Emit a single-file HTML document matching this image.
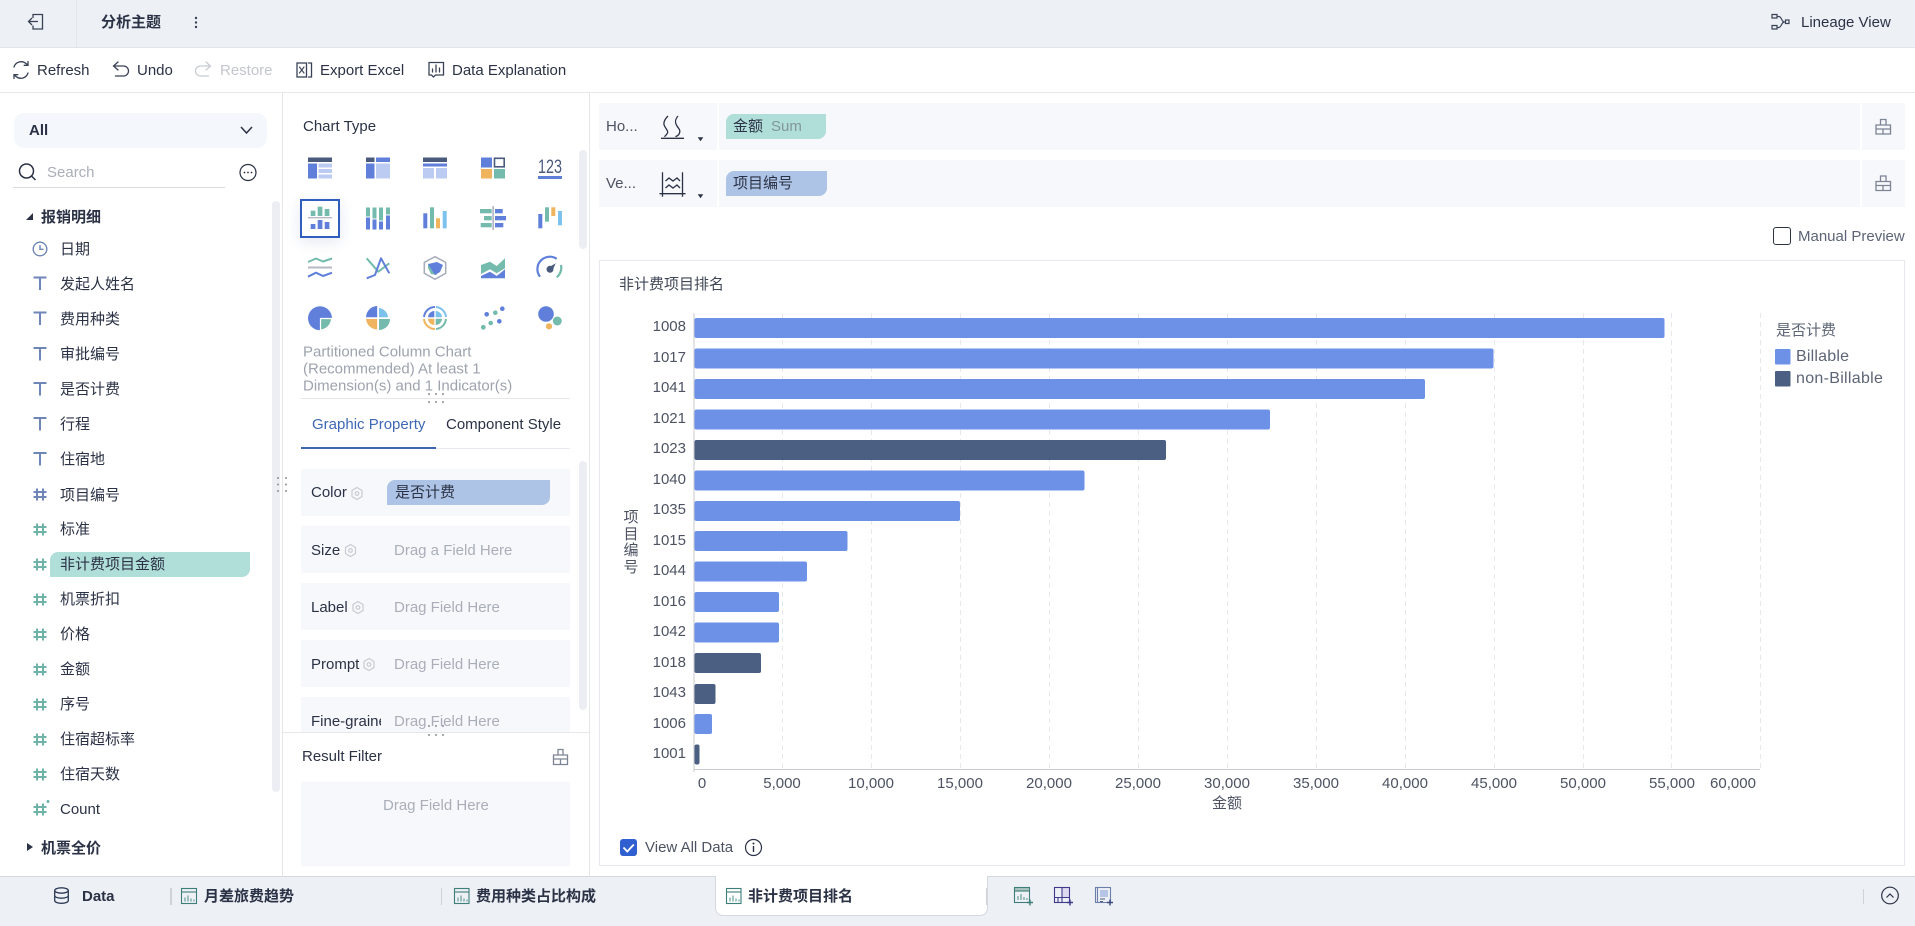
<!DOCTYPE html>
<html lang="zh">
<head>
<meta charset="utf-8">
<title>分析主题</title>
<style>
html,body{margin:0;padding:0;width:1915px;height:926px;overflow:hidden;background:#fff}
body{position:relative;font-family:"Liberation Sans","Noto Sans CJK SC",sans-serif;font-size:15px;color:#2b3245}
.b{position:absolute}
.t{position:absolute;white-space:nowrap;transform:translateY(-50%);line-height:20px}
.g{color:#a9aeb8}
.r{text-align:right;width:50px;color:#4d5362}
.c{transform:translate(-50%,-50%);color:#4d5362}
.bd{font-weight:bold}
.chip{position:absolute;border-radius:8px 0 8px 0}
.row{position:absolute;left:301px;width:269px;height:47px;background:#f7f8fc}
svg{position:absolute;left:0;top:0;pointer-events:none}
</style>
</head>
<body>
<!-- backgrounds -->
<div class="b" style="left:0;top:0;width:1915px;height:47px;background:#edf0f5;border-bottom:1px solid #e2e4e9"></div>
<div class="b" style="left:76px;top:0;width:1px;height:47px;background:#e3e6ec"></div>
<div class="b" style="left:0;top:92px;width:1915px;height:1px;background:#e6e7ea"></div>
<div class="b" style="left:282px;top:93px;width:1px;height:783px;background:#e6e7ea"></div>
<div class="b" style="left:589px;top:93px;width:1px;height:783px;background:#e6e7ea"></div>

<!-- top bar -->
<div class="t bd" style="left:101px;top:23px">分析主题</div>
<div class="t" style="left:1801px;top:23px">Lineage View</div>

<!-- toolbar -->
<div class="t" style="left:37px;top:71px">Refresh</div>
<div class="t" style="left:137px;top:71px">Undo</div>
<div class="t" style="left:220px;top:71px;color:#c3c6cd">Restore</div>
<div class="t" style="left:320px;top:71px">Export Excel</div>
<div class="t" style="left:452px;top:71px">Data Explanation</div>

<!-- left panel -->
<div class="b" style="left:14px;top:113px;width:253px;height:35px;background:#f4f8fd;border-radius:10px"></div>
<div class="t bd" style="left:29px;top:131px">All</div>
<div class="t g" style="left:47px;top:173px">Search</div>
<div class="b" style="left:13px;top:187px;width:212px;height:1px;background:#d8dade"></div>
<div class="b" style="left:272px;top:201px;width:8px;height:591px;background:#edeef3;border-radius:4px"></div>

<div class="t bd" style="left:41px;top:218px">报销明细</div>
<div class="t" style="left:60px;top:250px">日期</div>
<div class="t" style="left:60px;top:285px">发起人姓名</div>
<div class="t" style="left:60px;top:320px">费用种类</div>
<div class="t" style="left:60px;top:355px">审批编号</div>
<div class="t" style="left:60px;top:390px">是否计费</div>
<div class="t" style="left:60px;top:425px">行程</div>
<div class="t" style="left:60px;top:460px">住宿地</div>
<div class="t" style="left:60px;top:496px">项目编号</div>
<div class="t" style="left:60px;top:530px">标准</div>
<div class="chip" style="left:50px;top:552px;width:200px;height:25px;background:#b0ded8"></div>
<div class="t" style="left:60px;top:565px">非计费项目金额</div>
<div class="t" style="left:60px;top:600px">机票折扣</div>
<div class="t" style="left:60px;top:635px">价格</div>
<div class="t" style="left:60px;top:670px">金额</div>
<div class="t" style="left:60px;top:705px">序号</div>
<div class="t" style="left:60px;top:740px">住宿超标率</div>
<div class="t" style="left:60px;top:775px">住宿天数</div>
<div class="t" style="left:60px;top:810px">Count</div>
<div class="t bd" style="left:41px;top:849px">机票全价</div>

<!-- middle panel -->
<div class="t" style="left:303px;top:127px">Chart Type</div>
<div class="b" style="left:579px;top:150px;width:8px;height:99px;background:#edeef3;border-radius:4px"></div>
<div class="b" style="left:300px;top:199px;width:36px;height:35px;border:2px solid #2f5dc0;background:#fff;box-shadow:0 4px 14px rgba(90,110,170,.16)"></div>
<div class="t g" style="left:303px;top:352px;color:#9ea3ae;line-height:17px">Partitioned Column Chart</div>
<div class="t g" style="left:303px;top:369px;color:#9ea3ae;line-height:17px">(Recommended) At least 1</div>
<div class="t g" style="left:303px;top:386px;color:#9ea3ae;line-height:17px">Dimension(s) and 1 Indicator(s)</div>
<div class="b" style="left:301px;top:398px;width:269px;height:1px;background:#e6e7ea"></div>
<div class="t" style="left:312px;top:425px;color:#3f68b5">Graphic Property</div>
<div class="t" style="left:446px;top:425px">Component Style</div>
<div class="b" style="left:301px;top:448px;width:269px;height:1px;background:#e8e9ee"></div>
<div class="b" style="left:301px;top:447px;width:135px;height:2px;background:#3e65ae"></div>
<div class="b" style="left:579px;top:461px;width:8px;height:249px;background:#edeef3;border-radius:4px"></div>

<div class="row" style="top:469px"></div>
<div class="row" style="top:526px"></div>
<div class="row" style="top:583px"></div>
<div class="row" style="top:640px"></div>
<div class="row" style="top:697px;height:35px"></div>
<div class="t" style="left:311px;top:493px">Color</div>
<div class="chip" style="left:387px;top:480px;width:163px;height:25px;background:#aec4e6"></div>
<div class="t" style="left:395px;top:493px">是否计费</div>
<div class="t" style="left:311px;top:551px">Size</div>
<div class="t g" style="left:394px;top:551px">Drag a Field Here</div>
<div class="t" style="left:311px;top:608px">Label</div>
<div class="t g" style="left:394px;top:608px">Drag Field Here</div>
<div class="t" style="left:311px;top:665px">Prompt</div>
<div class="t g" style="left:394px;top:665px">Drag Field Here</div>
<div class="t" style="left:311px;top:722px;width:70px;overflow:hidden">Fine-grained</div>
<div class="t g" style="left:394px;top:722px">Drag Field Here</div>
<div class="b" style="left:283px;top:732px;width:306px;height:1px;background:#e6e7ea"></div>
<div class="t" style="left:302px;top:757px">Result Filter</div>
<div class="b" style="left:301px;top:782px;width:269px;height:84px;background:#f7f8fc"></div>
<div class="t g" style="left:383px;top:806px">Drag Field Here</div>

<!-- right top -->
<div class="b" style="left:599px;top:103px;width:118px;height:47px;background:#f7f8fc"></div>
<div class="b" style="left:719px;top:103px;width:1141px;height:47px;background:#f7f8fc"></div>
<div class="b" style="left:1862px;top:103px;width:43px;height:47px;background:#f7f8fc"></div>
<div class="b" style="left:599px;top:160px;width:118px;height:47px;background:#f7f8fc"></div>
<div class="b" style="left:719px;top:160px;width:1141px;height:47px;background:#f7f8fc"></div>
<div class="b" style="left:1862px;top:160px;width:43px;height:47px;background:#f7f8fc"></div>
<div class="t" style="left:606px;top:127px;color:#4d5362">Ho...</div>
<div class="t" style="left:606px;top:184px;color:#4d5362">Ve...</div>
<div class="chip" style="left:726px;top:114px;width:100px;height:25px;background:#b0ded8"></div>
<div class="t" style="left:733px;top:127px">金额</div>
<div class="t" style="left:771px;top:127px;color:#84969a">Sum</div>
<div class="chip" style="left:726px;top:171px;width:101px;height:25px;background:#aec4e6"></div>
<div class="t" style="left:733px;top:184px">项目编号</div>
<div class="b" style="left:1773px;top:227px;width:16px;height:16px;border:1px solid #2b3245;border-radius:3px"></div>
<div class="t" style="left:1798px;top:237px;color:#5c6475">Manual Preview</div>

<!-- chart card -->
<div class="b" style="left:599px;top:260px;width:1304px;height:604px;border:1px solid #e8e9ee"></div>
<div class="t" style="left:619px;top:285px;color:#3f4656">非计费项目排名</div>

<div class="t r" style="left:636px;top:327px">1008</div>
<div class="t r" style="left:636px;top:358px">1017</div>
<div class="t r" style="left:636px;top:388px">1041</div>
<div class="t r" style="left:636px;top:419px">1021</div>
<div class="t r" style="left:636px;top:449px">1023</div>
<div class="t r" style="left:636px;top:480px">1040</div>
<div class="t r" style="left:636px;top:510px">1035</div>
<div class="t r" style="left:636px;top:541px">1015</div>
<div class="t r" style="left:636px;top:571px">1044</div>
<div class="t r" style="left:636px;top:602px">1016</div>
<div class="t r" style="left:636px;top:632px">1042</div>
<div class="t r" style="left:636px;top:663px">1018</div>
<div class="t r" style="left:636px;top:693px">1043</div>
<div class="t r" style="left:636px;top:724px">1006</div>
<div class="t r" style="left:636px;top:754px">1001</div>

<div class="t c" style="left:702px;top:784px">0</div>
<div class="t c" style="left:782px;top:784px">5,000</div>
<div class="t c" style="left:871px;top:784px">10,000</div>
<div class="t c" style="left:960px;top:784px">15,000</div>
<div class="t c" style="left:1049px;top:784px">20,000</div>
<div class="t c" style="left:1138px;top:784px">25,000</div>
<div class="t c" style="left:1227px;top:784px">30,000</div>
<div class="t c" style="left:1316px;top:784px">35,000</div>
<div class="t c" style="left:1405px;top:784px">40,000</div>
<div class="t c" style="left:1494px;top:784px">45,000</div>
<div class="t c" style="left:1583px;top:784px">50,000</div>
<div class="t c" style="left:1672px;top:784px">55,000</div>
<div class="t c" style="left:1733px;top:784px">60,000</div>
<div class="t c" style="left:1227px;top:804px">金额</div>
<div class="b" style="left:623px;top:510px;width:16px;line-height:16.6px;text-align:center;color:#4d5362">项<br>目<br>编<br>号</div>

<div class="t" style="left:1776px;top:331px;color:#5c6475">是否计费</div>
<div class="t" style="left:1796px;top:357px;color:#5c6475;font-size:16px;letter-spacing:.2px">Billable</div>
<div class="t" style="left:1796px;top:379px;color:#5c6475;font-size:16px;letter-spacing:.3px">non-Billable</div>

<div class="b" style="left:620px;top:839px;width:17px;height:17px;background:#2f5fd0;border-radius:3px"></div>
<div class="t" style="left:645px;top:848px;color:#4d5362">View All Data</div>

<!-- bottom bar -->
<div class="b" style="left:0;top:876px;width:1915px;height:50px;background:#edf0f5;border-top:1px solid #d5d8de;box-sizing:border-box"></div>
<div class="b" style="left:715px;top:876px;width:271px;height:39px;background:#fff;border:1px solid #d5d8de;border-top:none;border-radius:0 0 8px 8px"></div>
<div class="t bd" style="left:82px;top:897px">Data</div>
<div class="b" style="left:170px;top:888px;width:2px;height:17px;background:#cfd2d8"></div>
<div class="t bd" style="left:204px;top:897px">月差旅费趋势</div>
<div class="b" style="left:441px;top:888px;width:1px;height:17px;background:#cfd2d8"></div>
<div class="t bd" style="left:476px;top:897px">费用种类占比构成</div>
<div class="t bd" style="left:748px;top:897px">非计费项目排名</div>
<div class="b" style="left:986px;top:888px;width:1px;height:17px;background:#cfd2d8"></div>
<div class="b" style="left:1863px;top:889px;width:1px;height:15px;background:#cfd2d8"></div>

<!-- all vector graphics -->
<svg width="1915" height="926" viewBox="0 0 1915 926" fill="none">
<!-- top icons -->
<g stroke="#3a4256" stroke-width="1.3">
<path d="M33 18v-3.500h9.500v14.500h-9.500v-3.500"/><path d="M38 21.500h-9.500M32 18l-3.500 3.500 3.500 3.500"/>
</g>
<g fill="#3a4256"><circle cx="196" cy="18" r="1.200"/><circle cx="196" cy="22.500" r="1.200"/><circle cx="196" cy="27" r="1.200"/></g>
<g stroke="#3a4256" stroke-width="1.200"><path d="M1777 18v-3.500h-5v3.500zM1777 29v-3.500h-5v3.500zM1777 16.500h2c2.500 0 2.500 5 5 5.500-2.500.5-2.500 5-5 5.500h-2M1784 22h1.500"/><rect x="1785.500" y="20" width="3.500" height="3.500"/></g>

<!-- toolbar icons -->
<g stroke="#3a4256" stroke-width="1.300" stroke-linecap="round">
<path d="M14 67a7.500 7.500 0 0 1 12-3.500l2 1.500M28 61.500v3.800h-3.800"/><path d="M28 73a7.500 7.500 0 0 1-12 3.500l-2-1.500M14 78.500v-3.800h3.800"/>
<path d="M118 62l-4.500 4 4.500 4M113.500 66h10a5 5 0 0 1 0 10h-8"/>
<rect x="297" y="63" width="9.500" height="14"/><path d="M308.500 63h3v14h-3"/>
<path d="M299.500 67l4.500 6M304 67l-4.500 6" stroke-width="1.100"/>
<path d="M429 62.500h14.500v12.500h-8l-2 2-2-2h-2.500zM432.500 72v-3M436 72v-7M439.500 72v-4"/>
</g>
<path d="M206 62l4.500 4-4.500 4M210.500 66h-10a5 5 0 0 0 0 10h8" stroke="#c8ccd2" stroke-width="1.300" stroke-linecap="round"/>

<!-- select & search -->
<path d="M241 127l5.500 6 5.500-6" stroke="#2b3245" stroke-width="1.500"/>
<circle cx="26.500" cy="171" r="7" stroke="#2b3245" stroke-width="1.500"/><path d="M31.500 176l4 4" stroke="#2b3245" stroke-width="1.500"/>
<circle cx="248" cy="172.500" r="8" stroke="#2b3245" stroke-width="1.200"/>
<g fill="#2b3245"><circle cx="244.500" cy="172.500" r=".9"/><circle cx="248" cy="172.500" r=".9"/><circle cx="251.500" cy="172.500" r=".9"/></g>

<!-- tree icons -->
<path d="M33 213v7h-7z" fill="#2b3245"/>
<path d="M27 843l6 4-6 4z" fill="#2b3245"/>
<circle cx="40" cy="249" r="6.800" stroke="#6f86b8" stroke-width="1.400"/><path d="M40 245v4.300h3.500" stroke="#6f86b8" stroke-width="1.400"/>
<g stroke="#6f86b8" stroke-width="2">
<path d="M33.500 277.500h13M40 277.500v12.500"/>
<path d="M33.500 312.500h13M40 312.500v12.500"/>
<path d="M33.500 348h13M40 348v12.500"/>
<path d="M33.500 383h13M40 383v12.500"/>
<path d="M33.500 418h13M40 418v12.500"/>
<path d="M33.500 453h13M40 453v12.500"/>
<path d="M33.500 492h13M33.500 497h13M37 488.500v12M43 488.500v12"/>
</g>
<g stroke="#6fb3a8" stroke-width="2">
<path d="M33.500 527h13M33.500 532h13M37 523.500v12M43 523.500v12"/>
<path d="M33.500 562h13M33.500 567h13M37 558.500v12M43 558.500v12"/>
<path d="M33.500 597h13M33.500 602h13M37 593.500v12M43 593.500v12"/>
<path d="M33.500 632h13M33.500 637h13M37 628.500v12M43 628.500v12"/>
<path d="M33.500 667h13M33.500 672h13M37 663.500v12M43 663.500v12"/>
<path d="M33.500 702h13M33.500 707h13M37 698.500v12M43 698.500v12"/>
<path d="M33.500 737h13M33.500 742h13M37 733.500v12M43 733.500v12"/>
<path d="M33.500 772h13M33.500 777h13M37 768.500v12M43 768.500v12"/>
<path d="M33.500 807h13M33.500 812h13M37 803.500v12M43 803.500v12"/>
</g>
<circle cx="48" cy="801.500" r="1.500" fill="#6fb3a8"/>

<!-- splitter dots -->
<g fill="#8a8f9a">
<circle cx="278" cy="478" r="1"/><circle cx="286" cy="478" r="1"/><circle cx="278" cy="484.500" r="1"/><circle cx="286" cy="484.500" r="1"/><circle cx="278" cy="491" r="1"/><circle cx="286" cy="491" r="1"/>
<circle cx="429" cy="394" r="1"/><circle cx="436" cy="394" r="1"/><circle cx="443" cy="394" r="1"/><circle cx="429" cy="402" r="1"/><circle cx="436" cy="402" r="1"/><circle cx="443" cy="402" r="1"/>
<circle cx="429" cy="726" r="1"/><circle cx="436" cy="726" r="1"/><circle cx="443" cy="726" r="1"/><circle cx="429" cy="735" r="1"/><circle cx="436" cy="735" r="1"/><circle cx="443" cy="735" r="1"/>
</g>

<!-- chart-type icons: row 1 -->
<g transform="translate(308,157.500)">
<rect width="24" height="4.500" fill="#4a5a7c"/><rect y="6" width="9" height="15" fill="#5f7fdb"/><rect x="10.500" y="6" width="13.500" height="4" fill="#bccbf1"/><rect x="10.500" y="11.500" width="13.500" height="4" fill="#bccbf1"/><rect x="10.500" y="17" width="13.500" height="4" fill="#bccbf1"/>
</g>
<g transform="translate(366,157.500)">
<rect width="8.500" height="4.500" fill="#4a5a7c"/><rect x="10" width="14" height="4.500" fill="#5f7fdb"/><rect y="6" width="8.500" height="15" fill="#5f7fdb"/><rect x="10" y="6" width="14" height="15" fill="#bccbf1"/>
</g>
<g transform="translate(423,157.500)">
<rect width="24" height="4.500" fill="#4a5a7c"/><rect y="6" width="24" height="3" fill="#5f7fdb"/><rect y="10.500" width="11" height="10.500" fill="#bccbf1"/><rect x="13" y="10.500" width="11" height="10.500" fill="#bccbf1"/>
</g>
<g transform="translate(481,157.500)">
<rect width="11" height="10" fill="#5f7fdb"/><rect x="13.500" y=".8" width="9.700" height="8.500" stroke="#4a5a7c" stroke-width="1.600"/><rect y="11.500" width="11" height="9.500" fill="#f0b35e"/><rect x="13" y="11.500" width="11" height="9.500" fill="#74bbad"/>
</g>
<text x="538" y="173" font-size="19" fill="#4a5a7c" textLength="24" lengthAdjust="spacingAndGlyphs" font-family="Liberation Sans">123</text>
<rect x="538" y="176" width="24" height="3" fill="#5f7fdb"/>

<!-- row 2 -->
<g>
<rect x="310.700" y="210.700" width="4.700" height="5.300" fill="#74bbad"/><rect x="317.700" y="206.700" width="4.700" height="9.300" fill="#74bbad"/><rect x="324.700" y="209" width="4.700" height="7" fill="#74bbad"/>
<rect x="308" y="217" width="24" height="1.400" fill="#b5bac6"/>
<rect x="310.700" y="224" width="4.700" height="5" fill="#5f7fdb"/><rect x="317.700" y="220" width="4.700" height="9" fill="#5f7fdb"/><rect x="324.700" y="222" width="4.700" height="7" fill="#5f7fdb"/>
</g>
<g transform="translate(366,207.500)">
<rect width="4" height="9" fill="#74bbad"/><rect x="6.500" width="4" height="11" fill="#74bbad"/><rect x="13" width="4" height="13" fill="#74bbad"/><rect x="20" width="4" height="7" fill="#74bbad"/>
<rect y="10" width="4" height="12" fill="#5f7fdb"/><rect x="6.500" y="12" width="4" height="10" fill="#5f7fdb"/><rect x="13" y="14" width="4" height="8" fill="#5f7fdb"/><rect x="20" y="8" width="4" height="14" fill="#5f7fdb"/>
</g>
<g>
<rect x="423.300" y="213.300" width="4" height="15" fill="#5f7fdb"/><rect x="430" y="207.300" width="4" height="21" fill="#74bbad"/><rect x="436" y="218.300" width="4" height="10" fill="#f0b35e"/><rect x="442.700" y="211" width="4" height="17.300" fill="#7cc2ec"/>
</g>
<g>
<rect x="480" y="209" width="11.700" height="4.300" fill="#74bbad"/><rect x="484" y="216" width="7.700" height="4.300" fill="#74bbad"/><rect x="480.700" y="223" width="11" height="4.300" fill="#74bbad"/>
<rect x="492.300" y="206" width="1.700" height="24" fill="#b5bac6"/>
<rect x="495" y="209" width="7.700" height="4.300" fill="#5f7fdb"/><rect x="495" y="216" width="11" height="4.300" fill="#5f7fdb"/><rect x="495" y="223" width="8.300" height="4.300" fill="#5f7fdb"/>
</g>
<g>
<rect x="538.300" y="214" width="4" height="14.300" fill="#5f7fdb"/><rect x="545" y="207.300" width="4" height="14.400" fill="#74bbad"/><rect x="551.300" y="207.300" width="4" height="8.700" fill="#f0b35e"/><rect x="558" y="211" width="4" height="14.300" fill="#7cc2ec"/>
</g>

<!-- row 3 -->
<g transform="translate(308,257)" stroke-width="2" stroke-linejoin="round">
<path d="M0 5L8 1.500 15 4.500 24 1.500" stroke="#74bbad"/><rect y="9.500" width="24" height="2" fill="#b5bac6" stroke="none"/><path d="M0 19.700L8 15.700 15 19 24 15.700" stroke="#5f7fdb"/>
</g>
<g transform="translate(366,256.500)" stroke-width="2" stroke-linejoin="round">
<path d="M.7 1.800L12.300 15.200 23.300 6.800" stroke="#74bbad"/><path d="M.7 21.800L9 18.500 15 1.800 23.300 16.800" stroke="#5f7fdb"/>
</g>
<path d="M435 256.700L445.700 262.300V273.300L435 279.300 424.300 273.300V262.300z" stroke="#a6acb9" stroke-width="1.500"/>
<path d="M428 268L431 274 436 275 439 271 428 264z" fill="#74bbad"/>
<path d="M428 264L437 262 443 265 440 272 435 275z" fill="#5f7fdb"/>
<path d="M481 265L490 261.700 496.700 266 505 258.300V268.300L496.700 273.300 490 269.300 481 274z" fill="#74bbad"/>
<path d="M481 278.300V276L490 271.700 496.700 276 505 269.300V278.300z" fill="#5f7fdb"/>
<path d="M540 276.700A12.400 12.400 0 0 1 556.700 258.800" stroke="#5f7fdb" stroke-width="2.200"/>
<path d="M561 265A12.400 12.400 0 0 1 556.700 277.300" stroke="#74bbad" stroke-width="2.200"/>
<circle cx="550" cy="269.300" r="3.500" fill="#4a5a7c"/><path d="M548.500 267.500L555.700 263.300 552.500 270.500z" fill="#4a5a7c"/>

<!-- row 4 -->
<g transform="translate(308,306)">
<path d="M12 .3A12 12 0 1 1 0 12.300a12 12 0 0 1 12-12z" fill="#5f7fdb"/>
<path d="M12.500 12.500h11a11.500 11.500 0 0 1-11 11.500z" fill="#74bbad" stroke="#fff" stroke-width="1.200"/>
</g>
<g transform="translate(366,306)">
<path d="M11.200 0v11.200H0A11.500 11.500 0 0 1 11.200 0z" fill="#5f7fdb"/><path d="M13 2a10 10 0 0 1 9 9.200h-9z" fill="#7cc2ec"/><path d="M0 13h11.200v10.500A11.500 11.500 0 0 1 0 13z" fill="#f0b35e"/><path d="M13 13h11a11 11 0 0 1-11 11z" fill="#74bbad"/>
</g>
<g transform="translate(423,306)">
<path d="M1 11a11 11 0 0 1 11-10" stroke="#5f7fdb" stroke-width="2"/><path d="M13 1a11 11 0 0 1 10 10" stroke="#7cc2ec" stroke-width="2"/><path d="M1 13a11 11 0 0 0 11 10" stroke="#f0b35e" stroke-width="2"/><path d="M13 23a11 11 0 0 0 10-10" stroke="#74bbad" stroke-width="2"/>
<path d="M11.300 5v6.300H5a6.500 6.500 0 0 1 6.300-6.300z" fill="#5f7fdb"/><path d="M12.700 5a6.500 6.500 0 0 1 6.300 6.300h-6.300z" fill="#7cc2ec"/><path d="M5 12.700h6.300V19A6.500 6.500 0 0 1 5 12.700z" fill="#f0b35e"/><path d="M12.700 12.700H19a6.500 6.500 0 0 1-6.300 6.300z" fill="#74bbad"/>
</g>
<g>
<circle cx="483.300" cy="327.300" r="2.400" fill="#74bbad"/><circle cx="490.700" cy="323" r="2.300" fill="#74bbad"/><circle cx="486.700" cy="314.300" r="2.300" fill="#5f7fdb"/><circle cx="495.300" cy="312.700" r="2.300" fill="#74bbad"/><circle cx="499.300" cy="321.300" r="2.300" fill="#5f7fdb"/><circle cx="502.300" cy="308.700" r="2.300" fill="#5f7fdb"/>
</g>
<g>
<circle cx="546" cy="314" r="7.800" fill="#5f7fdb"/><circle cx="557.300" cy="321" r="4.500" fill="#74bbad"/><circle cx="549" cy="326.300" r="3.100" fill="#f0b35e"/>
</g>

<!-- gear icons -->
<g stroke="#c8ccd2" stroke-width="1.200">
<path d="M357 487.500l5 3v6l-5 3-5-3v-6z"/><circle cx="357" cy="493.500" r="1.800"/>
<path d="M350.500 544.500l5 3v6l-5 3-5-3v-6z"/><circle cx="350.500" cy="550.500" r="1.800"/>
<path d="M358 601.500l5 3v6l-5 3-5-3v-6z"/><circle cx="358" cy="607.500" r="1.800"/>
<path d="M369 658.500l5 3v6l-5 3-5-3v-6z"/><circle cx="369" cy="664.500" r="1.800"/>
</g>

<!-- clear / briefcase icons -->
<g stroke="#7d8494" stroke-width="1.300">
<path d="M553.500 755h14v9.500h-14zM558 755v-5.500h5v5.500M553.500 759h14M560.500 759v5.500"/>
<path d="M1876 125h14.500v9h-14.500zM1880.500 125v-5.500h5.500v5.500M1876 129h14.500M1883 129v5"/>
<path d="M1876 181.500h14.500v9h-14.500zM1880.500 181.500v-5.500h5.500v5.500M1876 185.500h14.500M1883 185.500v5"/>
</g>

<!-- hor / ver icons -->
<g stroke="#2b3245" stroke-width="1.300">
<path d="M661 138.300h23"/><path d="M668 116C664 120 663 123 664.500 126S668.500 131 667.500 133 665 136 664.500 136.700M678 116C674.500 120 675 123 677 126S680.500 130 679.500 133 676.500 136 675.500 136.700"/>
<path d="M659.500 193.700h26M662.500 172.300v24.500M682.500 172.300v24.500"/><path d="M665.500 181l3.500-3 4 3 4-3 3 3M665.500 188l3.500-3 4 3 4-3 3 3"/>
</g>
<path d="M697.700 137.300h5.600l-2.800 4z" fill="#2b3245"/><path d="M697.700 194.300h5.600l-2.800 4z" fill="#2b3245"/>

<!-- chart grid -->
<g stroke="#e7e8ec" stroke-dasharray="5 4">
<path d="M782.500 313V769M871.500 313V769M960.500 313V769M1049.500 313V769M1138.500 313V769M1227.500 313V769M1316.500 313V769M1405.500 313V769M1494.500 313V769M1583.500 313V769M1671.500 313V769M1760.500 313V769"/>
</g>
<!-- bars -->
<g fill="#6e91e8">
<rect x="694.500" y="318" width="970" height="20" rx="2"/>
<rect x="694.500" y="348.500" width="799" height="20" rx="2"/>
<rect x="694.500" y="379" width="730.500" height="20" rx="2"/>
<rect x="694.500" y="409.500" width="575.500" height="20" rx="2"/>
<rect x="694.500" y="470.500" width="390" height="20" rx="2"/>
<rect x="694.500" y="501" width="265.500" height="20" rx="2"/>
<rect x="694.500" y="531" width="153" height="20" rx="2"/>
<rect x="694.500" y="561.500" width="112.500" height="20" rx="2"/>
<rect x="694.500" y="592" width="84.500" height="20" rx="2"/>
<rect x="694.500" y="622.500" width="84.500" height="20" rx="2"/>
<rect x="694.500" y="714" width="17.500" height="20" rx="2"/>
</g>
<g fill="#4a5f82">
<rect x="694.500" y="440" width="471.500" height="20" rx="2"/>
<rect x="694.500" y="653" width="66.500" height="20" rx="2"/>
<rect x="694.500" y="684" width="21" height="20" rx="2"/>
<rect x="694.500" y="744.500" width="5" height="20" rx="2"/>
</g>
<path d="M694 313V772M694 769.500H1760" stroke="#c8cacf" stroke-width="1"/>

<!-- legend -->
<rect x="1775" y="349" width="15.500" height="15.500" rx="1" fill="#6e91e8"/>
<rect x="1775" y="371" width="15.500" height="15.500" rx="1" fill="#4a5f82"/>

<!-- view all -->
<path d="M623.500 847.500l3.800 4 6.500-7" stroke="#fff" stroke-width="1.800"/>
<circle cx="753.500" cy="847.500" r="8" stroke="#2b3245" stroke-width="1.200"/><path d="M753.500 846v6" stroke="#2b3245" stroke-width="1.400"/><circle cx="753.500" cy="843.500" r="1" fill="#2b3245"/>

<!-- bottom icons -->
<g stroke="#2b3a55" stroke-width="1.300">
<ellipse cx="61.500" cy="890.500" rx="6.800" ry="2.700"/><path d="M54.700 890.500v10c0 1.600 3 2.800 6.800 2.800s6.800-1.200 6.800-2.800v-10M54.700 895.500c0 1.600 3 2.700 6.800 2.700s6.800-1.100 6.800-2.700"/>
</g>
<g stroke="#3d7f78" stroke-width="1.100">
<rect x="181.500" y="888.500" width="15" height="15"/><path d="M181.500 892h15"/><path d="M185 901.500v-4M188 901.500v-6M191 901.500v-3M194 901.500v-2" stroke="#5a9a92"/>
<rect x="454.500" y="888.500" width="14.500" height="15"/><path d="M454.500 892h14.500"/><path d="M458 901.500v-4M461 901.500v-6M464 901.500v-3M467 901.500v-2" stroke="#5a9a92"/>
<rect x="726.500" y="888.500" width="14.500" height="15"/><path d="M726.500 892h14.500"/><path d="M730 901.500v-4M733 901.500v-6M736 901.500v-3M739 901.500v-2" stroke="#5a9a92"/>
<rect x="1015" y="888" width="14.500" height="3" fill="#a9c4c0" stroke="none"/>
<rect x="1014.500" y="887.500" width="15" height="15"/><path d="M1014.500 891h15"/><path d="M1018 900v-4M1021 900v-6M1024 900v-3M1027 900v-2" stroke="#5a9a92"/><path d="M1027 902.500h6M1030 899.500v6" stroke-width="1.400"/>
</g>
<rect x="1062.500" y="888" width="6.500" height="9" fill="#ddd9ef"/>
<g stroke="#3f3a8c" stroke-width="1.100">
<rect x="1054.500" y="887.500" width="15" height="15"/><path d="M1062 887.500v15M1054.500 897.500h15M1058 897.500v5"/><path d="M1067 902.500h6M1070 899.500v6" stroke-width="1.400"/>
</g>
<rect x="1100" y="890" width="8" height="7" fill="#b6c4e6"/>
<g stroke="#6c7fa8" stroke-width="1.100">
<rect x="1095.500" y="887.500" width="15" height="15"/><path d="M1097.500 887.500v15"/><path d="M1100 899h5M1100 901.500h3" stroke="#4a5a7c"/><path d="M1107 902.500h6M1110 899.500v6" stroke="#3a4a7c" stroke-width="1.400"/>
</g>
<circle cx="1890" cy="895.500" r="8.300" stroke="#2b3245" stroke-width="1.200"/><path d="M1886.500 897.500l3.500-3.500 3.500 3.500" stroke="#2b3245" stroke-width="1.200"/>
</svg>
</body>
</html>
